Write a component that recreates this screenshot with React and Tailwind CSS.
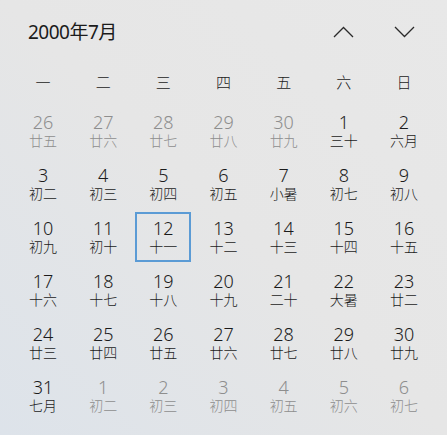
import React from 'react';

const weekDays = ['一', '二', '三', '四', '五', '六', '日'];

// [day, lunar, inMonth]
const weeks = [
    [[26, '廿五', 0], [27, '廿六', 0], [28, '廿七', 0], [29, '廿八', 0], [30, '廿九', 0], [1, '三十', 1], [2, '六月', 1]],
    [[3, '初二', 1], [4, '初三', 1], [5, '初四', 1], [6, '初五', 1], [7, '小暑', 1], [8, '初七', 1], [9, '初八', 1]],
    [[10, '初九', 1], [11, '初十', 1], [12, '十一', 1], [13, '十二', 1], [14, '十三', 1], [15, '十四', 1], [16, '十五', 1]],
    [[17, '十六', 1], [18, '十七', 1], [19, '十八', 1], [20, '十九', 1], [21, '二十', 1], [22, '大暑', 1], [23, '廿二', 1]],
    [[24, '廿三', 1], [25, '廿四', 1], [26, '廿五', 1], [27, '廿六', 1], [28, '廿七', 1], [29, '廿八', 1], [30, '廿九', 1]],
    [[31, '七月', 1], [1, '初二', 0], [2, '初三', 0], [3, '初四', 0], [4, '初五', 0], [5, '初六', 0], [6, '初七', 0]],
];

function DayCell({ day, lunar, inMonth, selected }) {
    return (
        <div className="h-[53px] flex items-center justify-center">
            <div
                className={
                    'w-[56px] h-[50px] flex flex-col items-center justify-center ' +
                    (selected ? 'border-2 border-[#5b9bd5]' : '') +
                    (inMonth ? ' text-[#1b1b1b]' : ' text-[#8e8e8e]')
                }
            >
                <span className="text-[18px] leading-[19px] font-light">{day}</span>
                <span className="text-[14px] leading-[17px] font-light">{lunar}</span>
            </div>
        </div>
    );
}

export default function App() {
    return (
        <div
            className="w-[447px] h-[435px] overflow-hidden bg-gradient-to-tr from-[#dde3ea] via-[#e6e6e6] to-[#e8e8e8] select-none"
            style={{ fontFamily: '"Noto Sans", "Noto Sans CJK SC", sans-serif' }}
        >
            {/* Header */}
            <div className="h-[64px] flex items-center pl-[28px] pr-[32px]">
                <span className="text-[19px] text-[#1b1b1b] tracking-[-0.5px]">2000年7月</span>
                <div className="ml-auto flex items-center gap-[40px]">
                    <svg width="21" height="12" viewBox="0 0 21 12" fill="none">
                        <path d="M1 11 L10.5 1.5 L20 11" stroke="#2a2a2a" strokeWidth="1.3" />
                    </svg>
                    <svg width="21" height="12" viewBox="0 0 21 12" fill="none">
                        <path d="M1 1 L10.5 10.5 L20 1" stroke="#2a2a2a" strokeWidth="1.3" />
                    </svg>
                </div>
            </div>

            <div className="px-[13px]">
                {/* Weekday row */}
                <div className="grid grid-cols-7 h-[36px] items-center">
                    {weekDays.map((w) => (
                        <div key={w} className="text-center text-[15px] font-light text-[#1b1b1b]">
                            {w}
                        </div>
                    ))}
                </div>

                {/* Dates */}
                <div className="mt-[4px]">
                    {weeks.map((week, wi) => (
                        <div key={wi} className="grid grid-cols-7">
                            {week.map(([day, lunar, inMonth], di) => (
                                <DayCell
                                    key={di}
                                    day={day}
                                    lunar={lunar}
                                    inMonth={inMonth}
                                    selected={wi === 2 && di === 2}
                                />
                            ))}
                        </div>
                    ))}
                </div>
            </div>
        </div>
    );
}
